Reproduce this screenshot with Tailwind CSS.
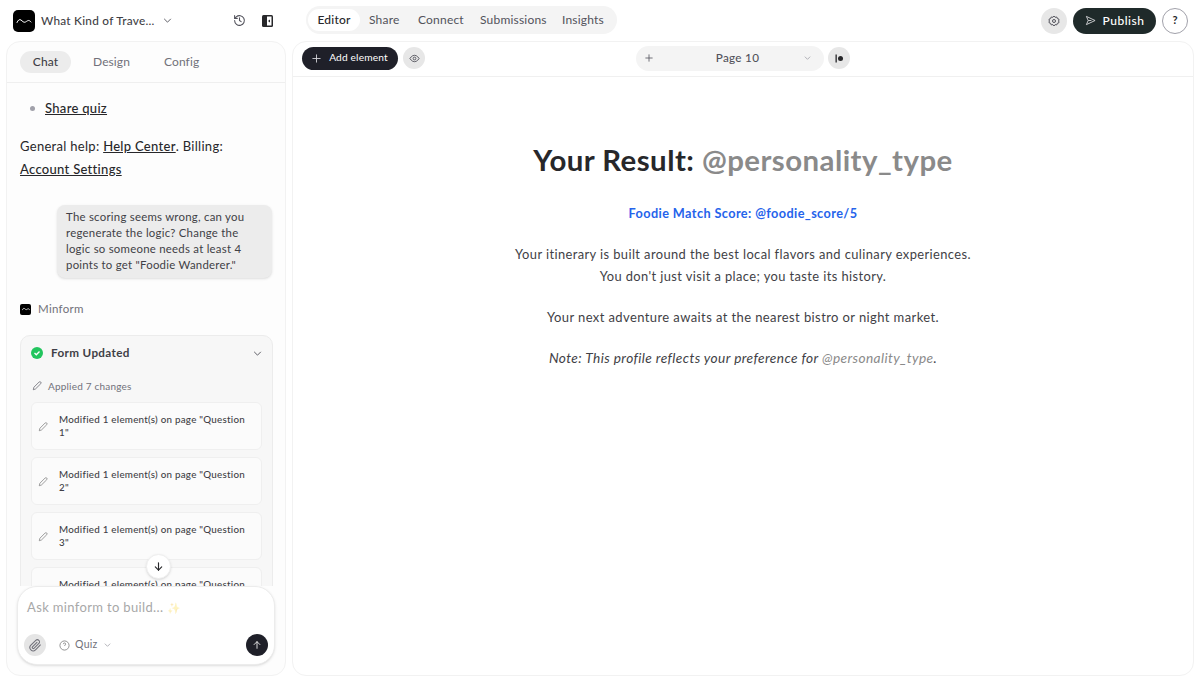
<!DOCTYPE html>
<html lang="en">
<head>
    <meta charset="UTF-8">
    <title>Minform Editor</title>
    <script src="https://cdn.jsdelivr.net/npm/@tailwindcss/browser@4"></script>
</head>
<body class="bg-white text-[#27272a] h-[682px] w-[1200px] overflow-hidden font-['Lato','Noto_Sans',sans-serif]">
    <!-- Top bar -->
    <header class="h-[41px] flex items-center">
        <div class="w-[292px] flex items-center pl-[13px] shrink-0">
            <div class="w-[22px] h-[22px] rounded-[5px] bg-black flex items-center justify-center">
                <svg width="16" height="8" viewBox="0 0 16 8" fill="none" stroke="white" stroke-width="1" stroke-linecap="round"><path d="M1 5.500c1-2.500 2.500-3.500 4-2.500s2.500 3 4.500 2S12.500 2 15 5"/></svg>
            </div>
            <span class="ml-[6px] w-[112px] whitespace-nowrap text-[11.800px] tracking-[0.25px] font-medium text-[#3f3f46]">What Kind of Trave...</span>
            <svg class="ml-[10px]" width="9" height="5" viewBox="0 0 10 6" fill="none" stroke="#52525b" stroke-width="1.100"><path d="M1 1l4 4 4-4"/></svg>
            <svg class="ml-[61px]" width="13" height="13" viewBox="0 0 24 24" fill="none" stroke="#52525b" stroke-width="2" stroke-linecap="round" stroke-linejoin="round"><path d="M3 12a9 9 0 1 0 3-6.700L3 8"/><path d="M3 3v5h5"/><path d="M12 7v5l3 2"/></svg>
            <svg class="ml-[16px]" width="11" height="12" viewBox="0 0 11 12"><rect width="11" height="12" rx="1.500" fill="#27272a"/><rect x="5" y="1.500" width="4.500" height="9" fill="white"/><path d="M8 4.500L6 6l2 1.500z" fill="#27272a"/></svg>
        </div>
        <nav class="ml-[14px] mb-[2px] h-[28px] w-[311px] rounded-full bg-[#f4f4f4] flex items-center pl-[2px] text-[12px] tracking-[0.2px] text-[#52525b] whitespace-nowrap">
            <span class="w-[52px] h-[22px] rounded-full bg-white flex items-center justify-center font-medium text-[#27272a]">Editor</span>
            <span class="ml-[9px] w-[30px]">Share</span>
            <span class="ml-[19px] w-[43px]">Connect</span>
            <span class="ml-[19px] w-[63px]">Submissions</span>
            <span class="ml-[19px]">Insights</span>
        </nav>
        <div class="ml-auto flex items-center pr-[12px]">
            <div class="w-[26px] h-[26px] rounded-full bg-[#e7e7e7] flex items-center justify-center">
                <svg width="12" height="12" viewBox="0 0 24 24" fill="none" stroke="#52525b" stroke-width="2" stroke-linejoin="round"><circle cx="12" cy="12" r="3"/><path d="M12 2l2.200 2.600 3.400-.6 1.200 3.200 3.200 1.200-.6 3.600 .6 3.400-3.200 1.200-1.200 3.200-3.400-.6L12 22l-2.200-2.800-3.400.6-1.200-3.200-3.200-1.200.6-3.400-.6-3.600 3.200-1.200 1.200-3.200 3.400.6z"/></svg>
            </div>
            <div class="ml-[6px] w-[83px] h-[26px] rounded-full bg-[#1f2a2a] flex items-center justify-center text-white text-[12px] font-medium tracking-[0.5px]">
                <svg class="mr-[7px]" width="11" height="11" viewBox="0 0 24 24" fill="none" stroke="#d4d4d8" stroke-width="2" stroke-linejoin="round"><path d="M3 3l19 9-19 9 4-9z"/><path d="M7 12h7"/></svg>
                Publish
            </div>
            <div class="ml-[6px] w-[26px] h-[26px] rounded-full border border-[#a1a1aa] bg-white flex items-center justify-center text-[11px] font-bold">?</div>
        </div>
    </header>

    <div class="flex px-[6px] gap-[6px] h-[635px]">
        <!-- Left panel -->
        <aside class="relative w-[280px] shrink-0 rounded-[14px] border border-[#f2f2f2] bg-[#fdfdfd] overflow-hidden flex flex-col">
            <div class="h-[41px] border-b border-[#efefef] flex items-center pl-[13px] text-[12px] tracking-[0.1px] text-[#71717a] shrink-0">
                <span class="w-[51px] h-[22px] rounded-full bg-[#ececec] text-[#3f3f46] font-medium flex items-center justify-center">Chat</span>
                <span class="ml-[22px] w-[36px]">Design</span>
                <span class="ml-[35px]">Config</span>
            </div>
            <div class="h-[503px] overflow-hidden px-[13px] text-[#27272a]">
                <div class="mt-[14px] flex items-center pl-[10px] text-[13px] leading-[22px] tracking-[0.3px]">
                    <span class="w-[5px] h-[5px] rounded-full bg-[#a1a1aa] mr-[10px]"></span>
                    <span class="underline font-medium">Share quiz</span>
                </div>
                <p class="mt-[16px] text-[13px] leading-[23px] tracking-[0.3px]">General help: <span class="underline font-medium">Help Center</span>. Billing:<br><span class="underline font-medium">Account Settings</span></p>
                <div class="mt-[24px] ml-[37px] w-[215px] rounded-[8px] bg-[#ececec] px-[9px] pt-[4px] pb-[5px] text-[11.400px] leading-[16px] tracking-[0.25px] text-[#3f3f46] shadow-sm">
                    The scoring seems wrong, can you regenerate the logic? Change the logic so someone needs at least 4 points to get "Foodie Wanderer."
                </div>
                <div class="mt-[24px] h-[14px] flex items-center text-[11.500px] tracking-[0.3px] text-[#71717a]">
                    <div class="w-[11px] h-[11px] rounded-[2px] bg-black mr-[7px] flex items-center justify-center">
                        <svg width="8" height="4" viewBox="0 0 16 8" fill="none" stroke="white" stroke-width="1.500" stroke-linecap="round"><path d="M1 5.500c1-2.500 2.500-3.500 4-2.500s2.500 3 4.500 2S12.500 2 15 5"/></svg>
                    </div>
                    Minform
                </div>
                <div class="mt-[19px] w-[253px] rounded-[10px] border border-[#ececec] bg-[#f7f7f7] px-[10px] h-[300px] overflow-hidden">
                    <div class="h-[34px] flex items-center">
                        <svg class="shrink-0" width="12" height="12" viewBox="0 0 12 12"><circle cx="6" cy="6" r="6" fill="#22c55e"/><path d="M3.500 6l1.800 1.800 3.200-3.300" fill="none" stroke="white" stroke-width="1.300"/></svg>
                        <span class="ml-[8px] text-[11.700px] font-bold tracking-[0.35px] text-[#3f3f46]">Form Updated</span>
                        <svg class="ml-auto" width="9" height="5" viewBox="0 0 10 6" fill="none" stroke="#52525b" stroke-width="1.100"><path d="M1 1l4 4 4-4"/></svg>
                    </div>
                    <div class="mt-[7px] h-[18px] flex items-center text-[10px] tracking-[0.2px] text-[#71717a]">
                        <svg class="ml-[1px]" width="10" height="10" viewBox="0 0 24 24" fill="none" stroke="#71717a" stroke-width="2" stroke-linejoin="round"><path d="M3 21l1.500-6L17 2.500a2.800 2.800 0 0 1 4 4L8.500 19z"/></svg>
                        <span class="ml-[6px]">Applied 7 changes</span>
                    </div>
                    <div class="mt-[7px] flex flex-col gap-[7px]">
                        <div class="h-[48px] rounded-[6px] border border-[#efefef] bg-[#fbfbfb] flex items-center pl-[6px] pr-[6px]">
                            <svg class="shrink-0 mt-[2px]" width="10" height="10" viewBox="0 0 24 24" fill="none" stroke="#8a8a8a" stroke-width="2" stroke-linejoin="round"><path d="M3 21l1.500-6L17 2.500a2.800 2.800 0 0 1 4 4L8.500 19z"/></svg>
                            <span class="ml-[11px] text-[9.800px] leading-[13px] tracking-[0.25px] font-medium text-[#3f3f46]">Modified 1 element(s) on page "Question<br>1"</span>
                        </div>
                        <div class="h-[48px] rounded-[6px] border border-[#efefef] bg-[#fbfbfb] flex items-center pl-[6px] pr-[6px]">
                            <svg class="shrink-0 mt-[2px]" width="10" height="10" viewBox="0 0 24 24" fill="none" stroke="#8a8a8a" stroke-width="2" stroke-linejoin="round"><path d="M3 21l1.500-6L17 2.500a2.800 2.800 0 0 1 4 4L8.500 19z"/></svg>
                            <span class="ml-[11px] text-[9.800px] leading-[13px] tracking-[0.25px] font-medium text-[#3f3f46]">Modified 1 element(s) on page "Question<br>2"</span>
                        </div>
                        <div class="h-[48px] rounded-[6px] border border-[#efefef] bg-[#fbfbfb] flex items-center pl-[6px] pr-[6px]">
                            <svg class="shrink-0 mt-[2px]" width="10" height="10" viewBox="0 0 24 24" fill="none" stroke="#8a8a8a" stroke-width="2" stroke-linejoin="round"><path d="M3 21l1.500-6L17 2.500a2.800 2.800 0 0 1 4 4L8.500 19z"/></svg>
                            <span class="ml-[11px] text-[9.800px] leading-[13px] tracking-[0.25px] font-medium text-[#3f3f46]">Modified 1 element(s) on page "Question<br>3"</span>
                        </div>
                        <div class="h-[48px] rounded-[6px] border border-[#efefef] bg-[#fbfbfb] flex items-center pl-[6px] pr-[6px]">
                            <svg class="shrink-0 mt-[2px]" width="10" height="10" viewBox="0 0 24 24" fill="none" stroke="#8a8a8a" stroke-width="2" stroke-linejoin="round"><path d="M3 21l1.500-6L17 2.500a2.800 2.800 0 0 1 4 4L8.500 19z"/></svg>
                            <span class="ml-[11px] text-[9.800px] leading-[13px] tracking-[0.25px] font-medium text-[#3f3f46]">Modified 1 element(s) on page "Question<br>4"</span>
                        </div>
                    </div>
                </div>
            </div>
            <!-- Scroll to bottom -->
            <div class="absolute left-[139px] top-[512px] w-[25px] h-[25px] rounded-full bg-white border border-[#efefef] shadow flex items-center justify-center">
                <svg width="11" height="11" viewBox="0 0 24 24" fill="none" stroke="#27272a" stroke-width="2.500" stroke-linecap="round" stroke-linejoin="round"><path d="M12 4v16"/><path d="M5 13l7 7 7-7"/></svg>
            </div>
            <!-- Composer -->
            <div class="absolute left-[10px] top-[544px] w-[258px] h-[79px] rounded-[20px] border border-[#ececec] bg-white shadow-sm">
                <div class="pl-[9px] pt-[11px] text-[13px] tracking-[0.35px] text-[#a8a8a8] leading-[18px]">Ask minform to build... <span class="opacity-30 text-[11px]">✨</span></div>
                <div class="mt-[17px] flex items-center pl-[6px] pr-[6px]">
                    <div class="w-[22px] h-[22px] rounded-full bg-[#e5e5e5] flex items-center justify-center">
                        <svg width="13" height="13" viewBox="0 0 24 24" fill="none" stroke="#71717a" stroke-width="2" stroke-linecap="round"><path d="M21 11l-9 9a6 6 0 0 1-8.500-8.500l9-9a4 4 0 0 1 5.700 5.700l-9 9a2 2 0 0 1-2.800-2.800l8.300-8.300"/></svg>
                    </div>
                    <svg class="ml-[13px]" width="11" height="11" viewBox="0 0 24 24" fill="none" stroke="#8a8a8a" stroke-width="2"><circle cx="12" cy="12" r="10"/><path d="M9.500 9a2.500 2.500 0 0 1 5 0c0 2-2.500 2-2.500 4M12 17h.01"/></svg>
                    <span class="ml-[5px] text-[10.500px] tracking-[0.3px] text-[#71717a]">Quiz</span>
                    <svg class="ml-[6px]" width="7" height="4" viewBox="0 0 10 6" fill="none" stroke="#a1a1aa" stroke-width="1.200"><path d="M1 1l4 4 4-4"/></svg>
                    <div class="ml-auto w-[22px] h-[22px] rounded-full bg-[#1f2029] flex items-center justify-center">
                        <svg width="10" height="10" viewBox="0 0 24 24" fill="none" stroke="white" stroke-width="2" stroke-linecap="round" stroke-linejoin="round"><path d="M12 20V4"/><path d="M5 11l7-7 7 7"/></svg>
                    </div>
                </div>
            </div>
        </aside>

        <!-- Right panel -->
        <main class="flex-1 rounded-[14px] border border-[#f2f2f2] bg-white overflow-hidden">
            <div class="h-[35px] border-b border-[#f0f0f0] flex items-center pl-[9px] pb-[2px]">
                <div class="w-[96px] h-[23px] rounded-full bg-[#1f2029] text-white text-[10.200px] tracking-[0.15px] flex items-center justify-center">
                    <svg class="mr-[8px]" width="9" height="9" viewBox="0 0 10 10" stroke="#d4d4d8" stroke-width="1"><path d="M5 0.500v9M0.500 5h9"/></svg>
                    Add element
                </div>
                <div class="ml-[5px] w-[22px] h-[22px] rounded-full bg-[#e7e7e7] flex items-center justify-center">
                    <svg width="11" height="11" viewBox="0 0 24 24" fill="none" stroke="#52525b" stroke-width="2"><path d="M2 12s4-7 10-7 10 7 10 7-4 7-10 7-10-7-10-7z"/><circle cx="12" cy="12" r="3"/></svg>
                </div>
                <div class="ml-[211px] w-[188px] h-[25px] rounded-full bg-[#f4f4f4] flex items-center pl-[9px] pr-[13px] text-[11.700px] tracking-[0.3px] text-[#52525b]">
                    <svg width="8" height="8" viewBox="0 0 10 10" stroke="#52525b" stroke-width="1"><path d="M5 0.500v9M0.500 5h9"/></svg>
                    <span class="flex-1 text-center font-medium pl-[18px]">Page 10</span>
                    <svg width="7" height="4" viewBox="0 0 10 6" fill="none" stroke="#a1a1aa" stroke-width="1.200"><path d="M1 1l4 4 4-4"/></svg>
                </div>
                <div class="ml-[4px] w-[22px] h-[22px] rounded-full bg-[#e7e7e7] flex items-center justify-center">
                    <svg width="9" height="9" viewBox="0 0 9 9" fill="#27272a"><rect x="0.500" y="0.500" width="1.300" height="8"/><circle cx="5.500" cy="4.500" r="2.500"/></svg>
                </div>
            </div>
            <div class="flex flex-col items-center text-center pt-[65px]">
                <h1 class="text-[29.400px] leading-[36px] font-bold tracking-[0.45px] text-[#27272a]">Your Result: <span class="text-[#8a8a8a]">@personality_type</span></h1>
                <p class="mt-[25px] text-[12.700px] leading-[20px] font-bold tracking-[0.4px] text-[#2563eb]">Foodie Match Score: @foodie_score/5</p>
                <p class="mt-[20px] text-[12.900px] leading-[22px] tracking-[0.4px] text-[#3f3f46]">Your itinerary is built around the best local flavors and culinary experiences.<br>You don't just visit a place; you taste its history.</p>
                <p class="mt-[19px] text-[13px] leading-[22px] tracking-[0.4px] text-[#3f3f46]">Your next adventure awaits at the nearest bistro or night market.</p>
                <p class="mt-[19px] text-[13.700px] leading-[22px] tracking-[0.4px] italic text-[#3f3f46]">Note: This profile reflects your preference for <span class="text-[#8a8a8a]">@personality_type</span>.</p>
            </div>
        </main>
    </div>
</body>
</html>
